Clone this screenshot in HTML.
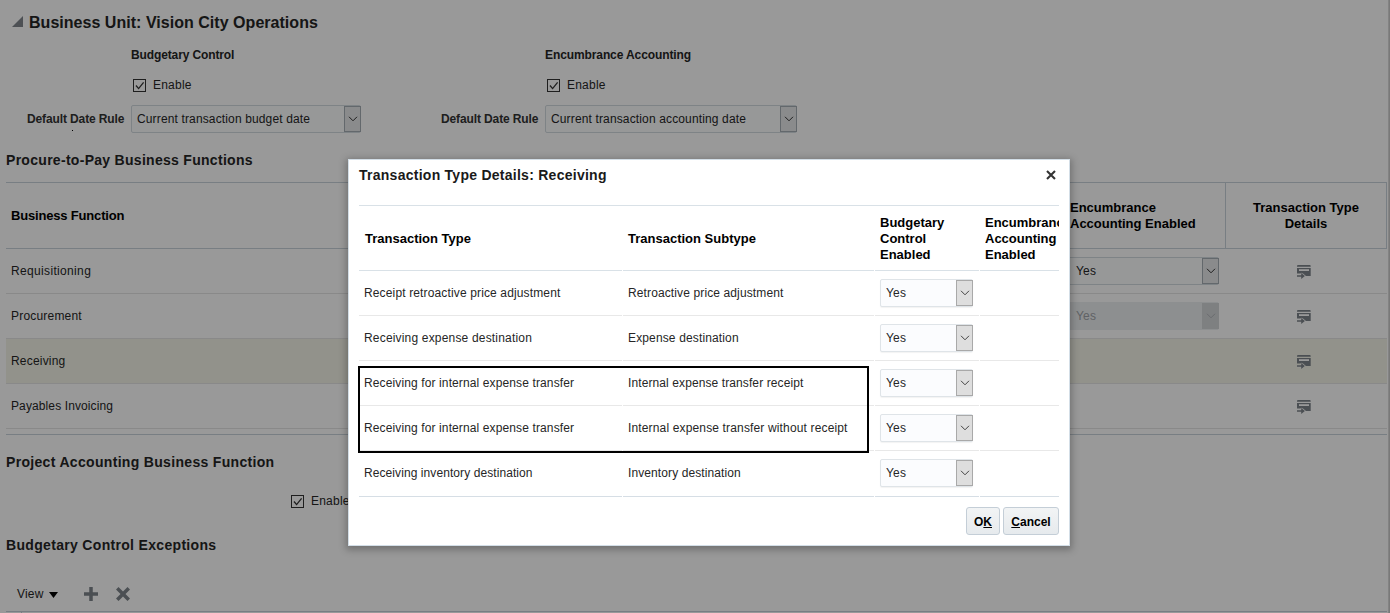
<!DOCTYPE html>
<html><head><meta charset="utf-8">
<style>
*{margin:0;padding:0;box-sizing:border-box}
html,body{width:1390px;height:613px;overflow:hidden;background:#fff;font-family:"Liberation Sans",sans-serif;color:#262626}
.a{position:absolute;white-space:nowrap;line-height:16px}
.b{font-weight:bold}
.f12{font-size:12px}
.f13{font-size:13px}
.f14{font-size:14px}
.hl{position:absolute;height:1px}
#page{position:absolute;left:0;top:0;width:1390px;height:613px}
#ov{position:absolute;left:0;top:0;width:1390px;height:613px;background:rgba(0,0,0,0.4)}
.cb{position:absolute;width:13px;height:13px;border:1px solid #333;background:#fff}
.sel{position:absolute;border:1px solid #d3dae0;background:#fcfdfe;border-radius:2px}
.sel .btn{position:absolute;right:-1px;top:0;bottom:0;width:17px;background:#e6e8ea;border:1px solid #a6aeb5}
.sel .btn svg{position:absolute;left:3px;top:9px}
#dlg{position:absolute;left:348px;top:159px;width:722px;height:387px;background:#fff;border:1px solid #d3dee7;box-shadow:0 2px 7px 2px rgba(0,0,0,0.26)}
.dsel{position:absolute;width:93px;height:28px;border:1px solid #dfe4e8;background:#fbfcfe;border-radius:2px;box-shadow:0 1px 1px rgba(0,0,0,0.05)}
.dsel .btn{position:absolute;right:-1px;top:0;width:17px;height:26px;background:#dedede;border:1px solid #a9a9a9}
.dsel .btn svg{position:absolute;left:3px;top:9px}
.dsel span{position:absolute;left:5px;top:5px;font-size:12px;line-height:16px;color:#262626;letter-spacing:0.2px}
.pb{position:absolute;height:28px;border:1px solid #c4ced7;border-radius:3px;background:linear-gradient(#f2f4f5,#e6eaed);font-weight:bold;font-size:12px;color:#000;text-align:center;line-height:28px}
</style></head><body>
<div id="page">
<svg style="position:absolute;left:12px;top:16px" width="11" height="11"><polygon points="11,0 11,11 0,11" fill="#80868c"/></svg>
<div class="a b" style="left:29px;top:15px;letter-spacing:0.03px;font-size:16px">Business Unit: Vision City Operations</div>
<div class="a b f12" style="left:131px;top:47px;letter-spacing:-0.12px">Budgetary Control</div>
<div class="cb" style="left:133px;top:79px"><svg width="11" height="11" style="position:absolute;left:0;top:0"><polyline points="2,5.5 4.6,8.6 9.6,2.4" fill="none" stroke="#333" stroke-width="1.3"/></svg></div>
<div class="a f12" style="left:153px;top:77px;letter-spacing:0.22px">Enable</div>
<div class="a b f12" style="left:27px;top:111px;letter-spacing:-0.12px;color:#333">Default Date Rule</div>
<div class="sel" style="left:131px;top:105px;width:230px;height:28px"><div class="a f12" style="left:5px;top:5px;letter-spacing:0.14px">Current transaction budget date</div><div class="btn"><svg width="10" height="6"><polyline points="1,0.8 5,4.8 9,0.8" fill="none" stroke="#333" stroke-width="1"/></svg></div></div>
<div class="a b f12" style="left:545px;top:47px;letter-spacing:-0.1px">Encumbrance Accounting</div>
<div class="cb" style="left:547px;top:79px"><svg width="11" height="11" style="position:absolute;left:0;top:0"><polyline points="2,5.5 4.6,8.6 9.6,2.4" fill="none" stroke="#333" stroke-width="1.3"/></svg></div>
<div class="a f12" style="left:567px;top:77px;letter-spacing:0.22px">Enable</div>
<div class="a b f12" style="left:441px;top:111px;letter-spacing:-0.12px;color:#333">Default Date Rule</div>
<div class="sel" style="left:545px;top:105px;width:252px;height:28px"><div class="a f12" style="left:5px;top:5px;letter-spacing:0.14px">Current transaction accounting date</div><div class="btn"><svg width="10" height="6"><polyline points="1,0.8 5,4.8 9,0.8" fill="none" stroke="#333" stroke-width="1"/></svg></div></div>
<div style="position:absolute;left:72px;top:130px;width:1px;height:1px;background:#000"></div>
<div class="a b f14" style="left:6px;top:152px;letter-spacing:0.29px">Procure-to-Pay Business Functions</div>
<div class="hl" style="left:6px;top:182px;width:1381px;background:#c9d2da"></div>
<div class="hl" style="left:6px;top:248px;width:1381px;background:#c9d2da"></div>
<div style="position:absolute;left:1225px;top:182px;width:1px;height:67px;background:#c9d2da"></div>
<div style="position:absolute;left:1386px;top:182px;width:1px;height:67px;background:#c9d2da"></div>
<div class="a b f13" style="left:11px;top:208px;letter-spacing:-0.18px;color:#000">Business Function</div>
<div class="a b f13" style="left:1070px;top:200px;color:#000">Encumbrance<br>Accounting Enabled</div>
<div class="a b f13" style="left:1226px;top:200px;width:160px;text-align:center;color:#000">Transaction Type<br>Details</div>
<div style="position:absolute;left:6px;top:339px;width:1381px;height:44px;background:#f4f4e8"></div>
<div class="hl" style="left:6px;top:293px;width:1381px;background:#e5e5e5"></div>
<div class="hl" style="left:6px;top:338px;width:1381px;background:#e5e5e5"></div>
<div class="hl" style="left:6px;top:383px;width:1381px;background:#e5e5e5"></div>
<div class="hl" style="left:6px;top:428px;width:1381px;background:#e5e5e5"></div>
<div class="hl" style="left:6px;top:434px;width:1381px;background:#c9d2da"></div>
<div class="a f12" style="left:11px;top:263px;letter-spacing:0.34px">Requisitioning</div>
<div class="a f12" style="left:11px;top:308px;letter-spacing:0.2px">Procurement</div>
<div class="a f12" style="left:11px;top:353px;letter-spacing:0.19px">Receiving</div>
<div class="a f12" style="left:11px;top:398px;letter-spacing:0.11px">Payables Invoicing</div>
<div class="sel" style="left:1040px;top:257px;width:179px;height:28px"><div class="a f12" style="left:35px;top:5px;letter-spacing:0.16px">Yes</div><div class="btn"><svg width="10" height="6"><polyline points="1,0.8 5,4.8 9,0.8" fill="none" stroke="#333" stroke-width="1"/></svg></div></div>
<div class="sel" style="left:1040px;top:302px;width:179px;height:28px;background:#eceef0;border-color:#eceef0"><div class="a f12" style="left:35px;top:5px;letter-spacing:0.16px;color:#a0a4a8">Yes</div><div class="btn" style="background:#d2d5d8;border-color:#d2d5d8"><svg width="10" height="6"><polyline points="1,0.8 5,4.8 9,0.8" fill="none" stroke="#b0b4b8" stroke-width="1"/></svg></div></div>
<svg style="position:absolute;left:1297px;top:265px" width="14" height="15" viewBox="0 0 14 15"><path d="M1 0H12.7Q13.7 0 13.7 1V1.8H0V1Q0 0 1 0Z M0 3H13.7V11H9L6 8.4H0Z" fill="#7e848a"/><rect x="2" y="4.2" width="10" height="1.8" fill="#fff"/><path d="M0 10.3H4.2V8.1L7.9 11.05L4.2 14V11.8H0Z" fill="#7e848a" stroke="#fff" stroke-width="0.9" paint-order="stroke"/></svg>
<svg style="position:absolute;left:1297px;top:310px" width="14" height="15" viewBox="0 0 14 15"><path d="M1 0H12.7Q13.7 0 13.7 1V1.8H0V1Q0 0 1 0Z M0 3H13.7V11H9L6 8.4H0Z" fill="#7e848a"/><rect x="2" y="4.2" width="10" height="1.8" fill="#fff"/><path d="M0 10.3H4.2V8.1L7.9 11.05L4.2 14V11.8H0Z" fill="#7e848a" stroke="#fff" stroke-width="0.9" paint-order="stroke"/></svg>
<svg style="position:absolute;left:1297px;top:355px" width="14" height="15" viewBox="0 0 14 15"><path d="M1 0H12.7Q13.7 0 13.7 1V1.8H0V1Q0 0 1 0Z M0 3H13.7V11H9L6 8.4H0Z" fill="#7e848a"/><rect x="2" y="4.2" width="10" height="1.8" fill="#fff"/><path d="M0 10.3H4.2V8.1L7.9 11.05L4.2 14V11.8H0Z" fill="#7e848a" stroke="#fff" stroke-width="0.9" paint-order="stroke"/></svg>
<svg style="position:absolute;left:1297px;top:400px" width="14" height="15" viewBox="0 0 14 15"><path d="M1 0H12.7Q13.7 0 13.7 1V1.8H0V1Q0 0 1 0Z M0 3H13.7V11H9L6 8.4H0Z" fill="#7e848a"/><rect x="2" y="4.2" width="10" height="1.8" fill="#fff"/><path d="M0 10.3H4.2V8.1L7.9 11.05L4.2 14V11.8H0Z" fill="#7e848a" stroke="#fff" stroke-width="0.9" paint-order="stroke"/></svg>
<div class="a b f14" style="left:6px;top:454px;letter-spacing:0.32px">Project Accounting Business Function</div>
<div class="cb" style="left:291px;top:495px"><svg width="11" height="11" style="position:absolute;left:0;top:0"><polyline points="2,5.5 4.6,8.6 9.6,2.4" fill="none" stroke="#333" stroke-width="1.3"/></svg></div>
<div class="a f12" style="left:311px;top:493px;letter-spacing:0.22px">Enable</div>
<div class="a b f14" style="left:6px;top:537px;letter-spacing:0.32px">Budgetary Control Exceptions</div>
<div class="a f12" style="left:17px;top:586px;letter-spacing:0.2px">View</div>
<svg style="position:absolute;left:49px;top:592px" width="9" height="6"><polygon points="0,0 9,0 4.5,6" fill="#000"/></svg>
<svg style="position:absolute;left:84px;top:587px" width="14" height="14"><path d="M5.25 0H8.75V5.25H14V8.75H8.75V14H5.25V8.75H0V5.25H5.25Z" fill="#7e848a"/></svg>
<svg style="position:absolute;left:116px;top:587px" width="14" height="14"><path d="M2.5 0L7 4.5L11.5 0L14 2.5L9.5 7L14 11.5L11.5 14L7 9.5L2.5 14L0 11.5L4.5 7L0 2.5Z" fill="#7e848a"/></svg>
<div class="hl" style="left:6px;top:611px;width:1381px;background:#c9d2da"></div>
<div style="position:absolute;left:21px;top:612px;width:1px;height:1px;background:#c9d2da"></div>
</div>
<div id="ov"></div>
<div style="position:absolute;left:1388px;top:0;width:2px;height:613px;background:linear-gradient(90deg,#888,#747474)"></div>
<div id="dlg">
<div class="a b f14" style="left:10px;top:7px;letter-spacing:0.26px;color:#1a1a1a">Transaction Type Details: Receiving</div>
<svg style="position:absolute;left:697px;top:10px" width="10" height="10"><path d="M1 1L9 9M9 1L1 9" stroke="#333" stroke-width="2.1"/></svg>
<div class="hl" style="left:10px;top:45px;width:700px;background:#d9e1e7"></div>
<div class="a b f13" style="left:16px;top:71px;color:#000">Transaction Type</div>
<div class="a b f13" style="left:279px;top:71px;color:#000">Transaction Subtype</div>
<div class="a b f13" style="left:531px;top:55px;color:#000">Budgetary<br>Control<br>Enabled</div>
<div style="position:absolute;left:636px;top:55px;width:74px;height:50px;overflow:hidden"><div class="a b f13" style="left:0;top:0;color:#000">Encumbrance<br>Accounting<br>Enabled</div></div>
<div class="hl" style="left:10px;top:110px;width:263px;background:#d9e1e7"></div>
<div class="hl" style="left:274px;top:110px;width:251px;background:#d9e1e7"></div>
<div class="hl" style="left:526px;top:110px;width:104px;background:#d9e1e7"></div>
<div class="hl" style="left:631px;top:110px;width:79px;background:#d9e1e7"></div>
<div class="hl" style="left:10px;top:155px;width:263px;background:#e8e8e8"></div>
<div class="hl" style="left:274px;top:155px;width:251px;background:#e8e8e8"></div>
<div class="hl" style="left:526px;top:155px;width:104px;background:#e8e8e8"></div>
<div class="hl" style="left:631px;top:155px;width:79px;background:#e8e8e8"></div>
<div class="hl" style="left:10px;top:200px;width:263px;background:#e8e8e8"></div>
<div class="hl" style="left:274px;top:200px;width:251px;background:#e8e8e8"></div>
<div class="hl" style="left:526px;top:200px;width:104px;background:#e8e8e8"></div>
<div class="hl" style="left:631px;top:200px;width:79px;background:#e8e8e8"></div>
<div class="hl" style="left:10px;top:245px;width:263px;background:#e8e8e8"></div>
<div class="hl" style="left:274px;top:245px;width:251px;background:#e8e8e8"></div>
<div class="hl" style="left:526px;top:245px;width:104px;background:#e8e8e8"></div>
<div class="hl" style="left:631px;top:245px;width:79px;background:#e8e8e8"></div>
<div class="hl" style="left:10px;top:290px;width:263px;background:#e8e8e8"></div>
<div class="hl" style="left:274px;top:290px;width:251px;background:#e8e8e8"></div>
<div class="hl" style="left:526px;top:290px;width:104px;background:#e8e8e8"></div>
<div class="hl" style="left:631px;top:290px;width:79px;background:#e8e8e8"></div>
<div class="hl" style="left:10px;top:336px;width:263px;background:#d6dee5"></div>
<div class="hl" style="left:274px;top:336px;width:251px;background:#d6dee5"></div>
<div class="hl" style="left:526px;top:336px;width:104px;background:#d6dee5"></div>
<div class="hl" style="left:631px;top:336px;width:79px;background:#d6dee5"></div>
<div class="a f12" style="left:15px;top:125px;letter-spacing:0.14px">Receipt retroactive price adjustment</div>
<div class="a f12" style="left:279px;top:125px;letter-spacing:0.12px">Retroactive price adjustment</div>
<div class="dsel" style="left:531px;top:119px"><span>Yes</span><div class="btn"><svg width="10" height="6"><polyline points="1,0.8 5,4.8 9,0.8" fill="none" stroke="#444" stroke-width="1"/></svg></div></div>
<div class="a f12" style="left:15px;top:170px;letter-spacing:0.18px">Receiving expense destination</div>
<div class="a f12" style="left:279px;top:170px;letter-spacing:0.14px">Expense destination</div>
<div class="dsel" style="left:531px;top:164px"><span>Yes</span><div class="btn"><svg width="10" height="6"><polyline points="1,0.8 5,4.8 9,0.8" fill="none" stroke="#444" stroke-width="1"/></svg></div></div>
<div class="a f12" style="left:15px;top:215px;letter-spacing:0.12px">Receiving for internal expense transfer</div>
<div class="a f12" style="left:279px;top:215px;letter-spacing:0.1px">Internal expense transfer receipt</div>
<div class="dsel" style="left:531px;top:209px"><span>Yes</span><div class="btn"><svg width="10" height="6"><polyline points="1,0.8 5,4.8 9,0.8" fill="none" stroke="#444" stroke-width="1"/></svg></div></div>
<div class="a f12" style="left:15px;top:260px;letter-spacing:0.12px">Receiving for internal expense transfer</div>
<div class="a f12" style="left:279px;top:260px;letter-spacing:0.15px">Internal expense transfer without receipt</div>
<div class="dsel" style="left:531px;top:254px"><span>Yes</span><div class="btn"><svg width="10" height="6"><polyline points="1,0.8 5,4.8 9,0.8" fill="none" stroke="#444" stroke-width="1"/></svg></div></div>
<div class="a f12" style="left:15px;top:305px;letter-spacing:0.08px">Receiving inventory destination</div>
<div class="a f12" style="left:279px;top:305px;letter-spacing:0.1px">Inventory destination</div>
<div class="dsel" style="left:531px;top:299px"><span>Yes</span><div class="btn"><svg width="10" height="6"><polyline points="1,0.8 5,4.8 9,0.8" fill="none" stroke="#444" stroke-width="1"/></svg></div></div>
<div style="position:absolute;left:9px;top:206px;width:511px;height:87px;border:2px solid #000"></div>
<div class="pb" style="left:617px;top:347px;width:34px"><span>O<u>K</u></span></div>
<div class="pb" style="left:654px;top:347px;width:56px"><span><u>C</u>ancel</span></div>
</div>
</body></html>
